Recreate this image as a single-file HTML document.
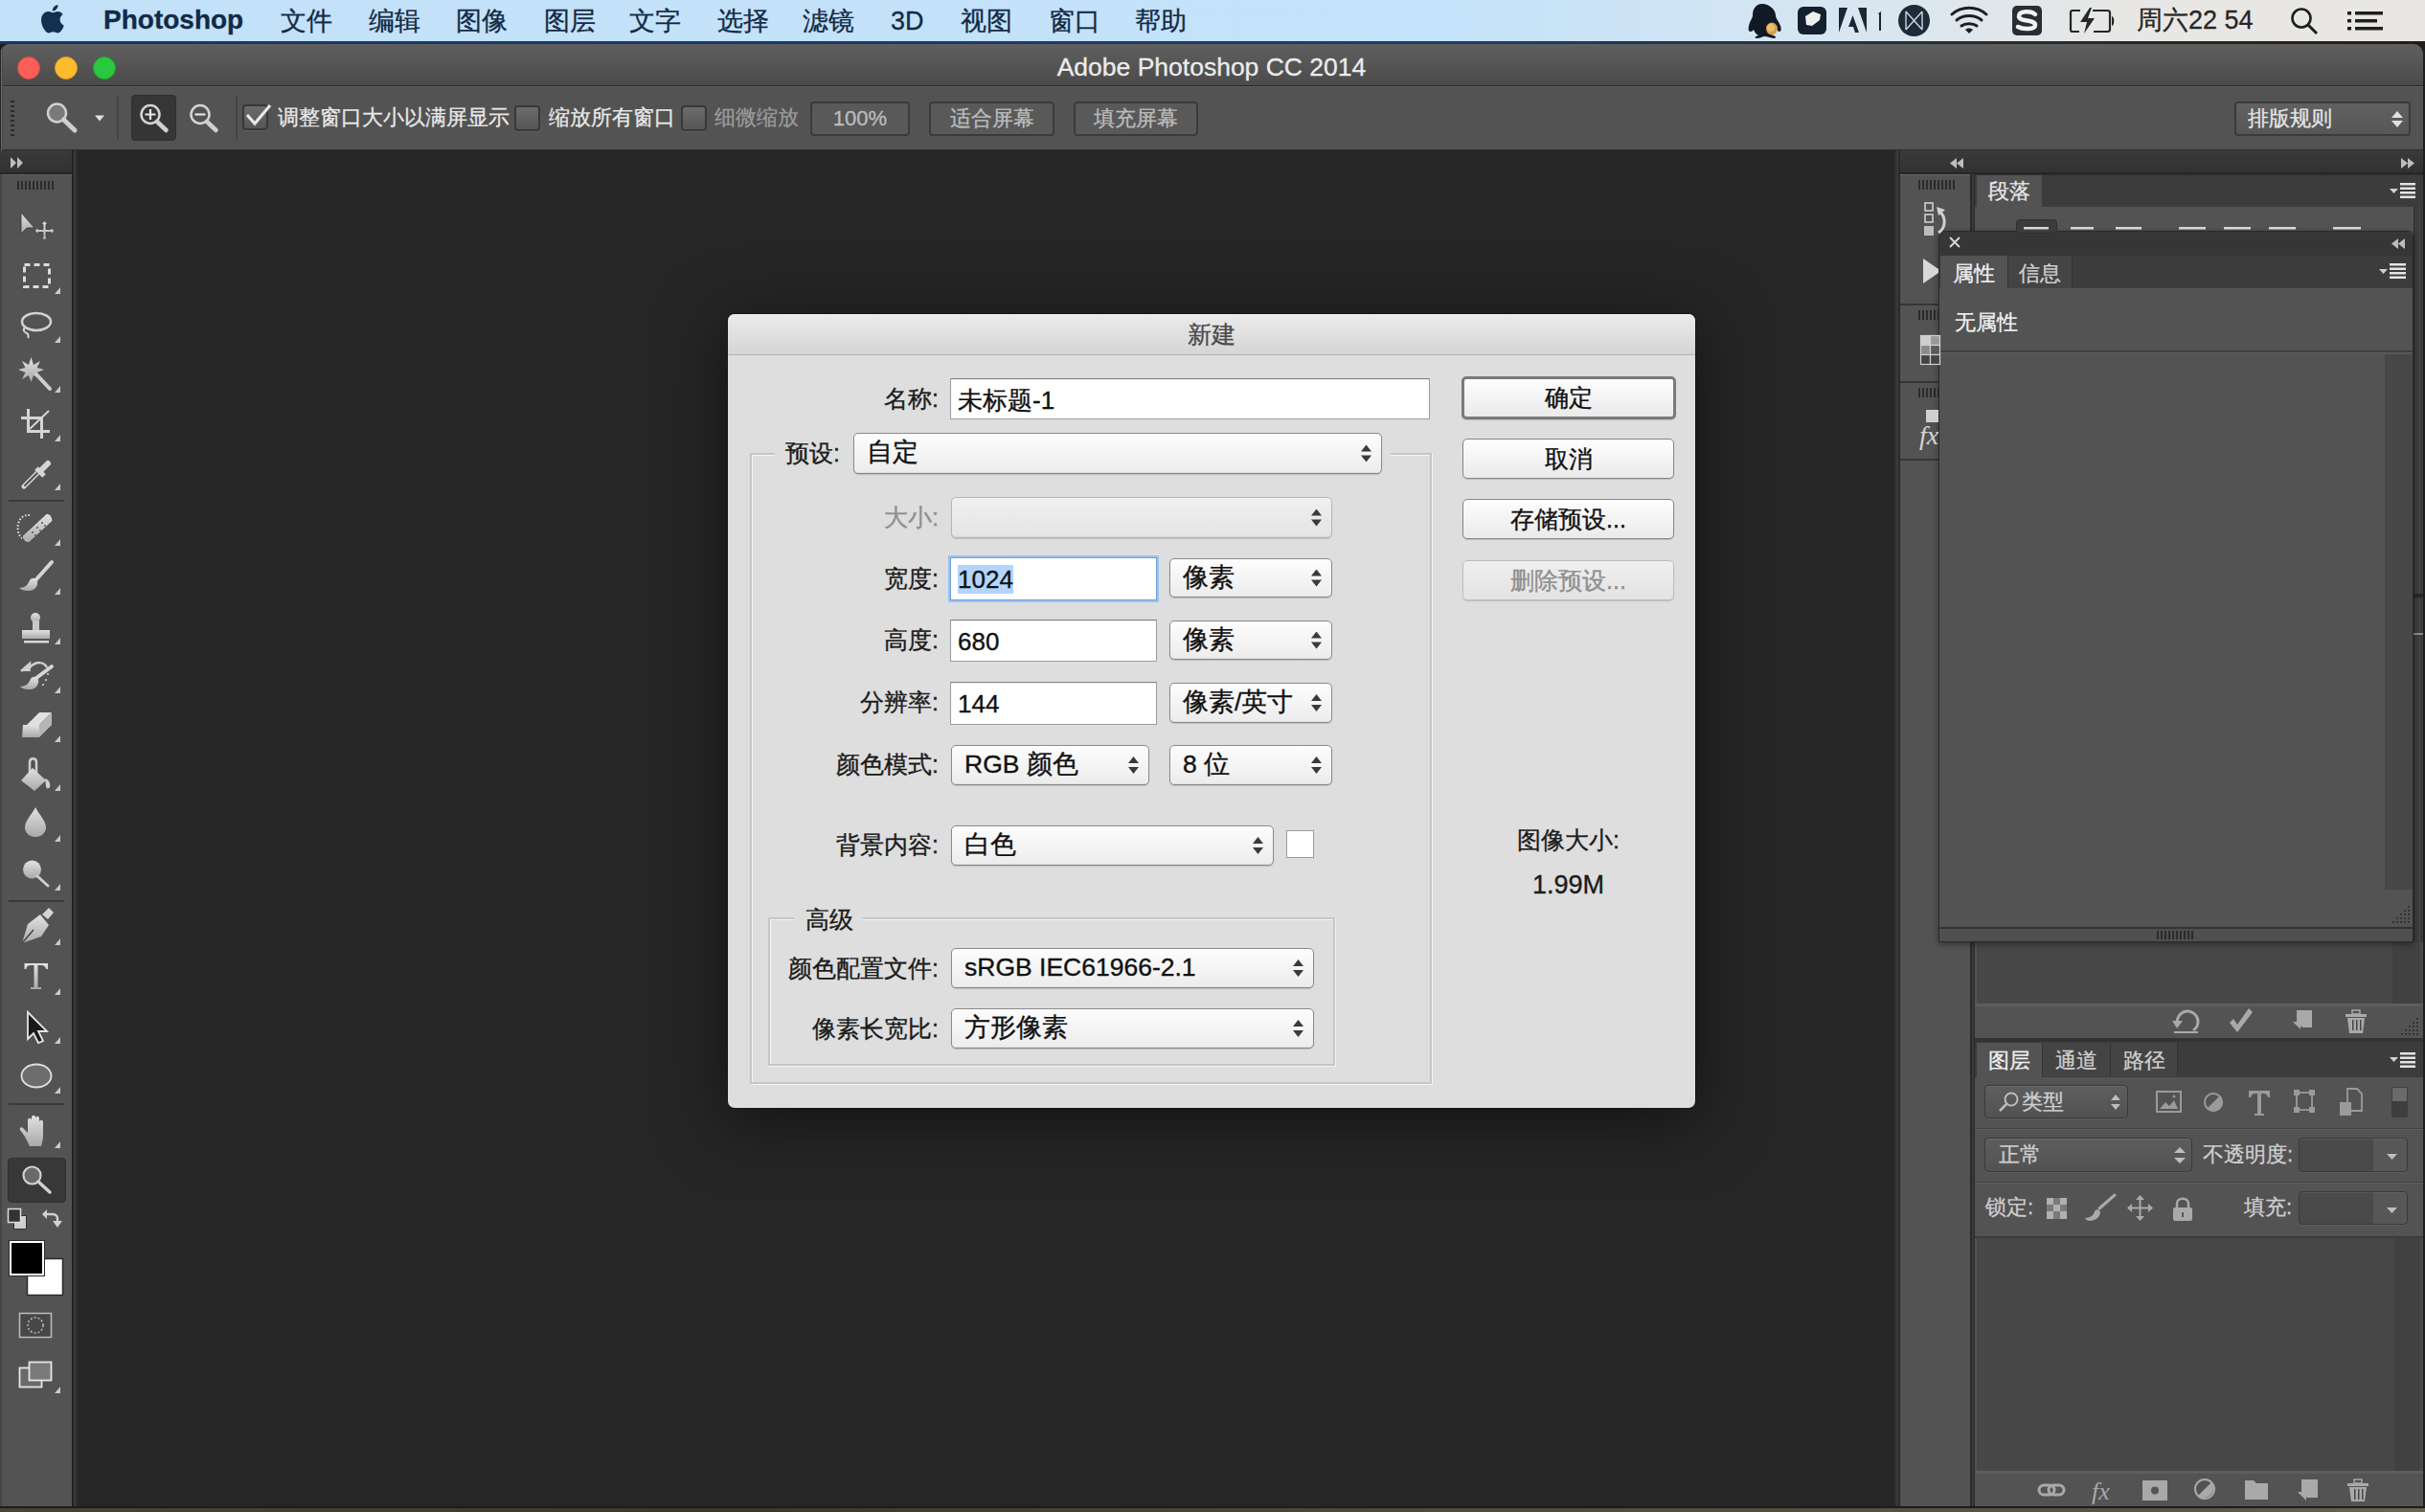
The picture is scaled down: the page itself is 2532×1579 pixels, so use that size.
<!DOCTYPE html>
<html><head><meta charset="utf-8">
<style>
*{margin:0;padding:0;box-sizing:border-box}
html,body{width:2532px;height:1579px;overflow:hidden;background:#1e1e1e;font-family:"Liberation Sans",sans-serif}
.a{position:absolute}
div{-webkit-text-stroke:0.3px currentColor}
#dlg ~ div{-webkit-text-stroke:0.35px currentColor}
#menubar{left:0;top:0;width:2532px;height:44px;background:linear-gradient(90deg,#c3e1f8 0%,#c4e2f9 60%,#d6e6f2 75%,#e8e7e5 88%,#e9e7e3 100%)}
#menuline{left:0;top:43px;width:2532px;height:3px;background:linear-gradient(90deg,#17375e,#1d3d63 60%,#2a2a2a 85%,#221d18)}
.mi{position:absolute;top:6px;font-size:27px;color:#122a45;line-height:32px;white-space:nowrap}
#win{left:0;top:46px;width:2530px;height:1529px;border-bottom:2px solid #1c1c1c;background:#262626;border-radius:10px 10px 0 0;overflow:hidden}
#title{left:0;top:46px;border-radius:10px 10px 0 0;width:2530px;height:43px;background:linear-gradient(#5f5f5f,#4b4b4b);}
#titletext{left:0;top:2px;width:2530px;text-align:center;font-size:26.5px;line-height:44px;color:#ececec}
.tl{position:absolute;top:13px;width:24px;height:24px;border-radius:50%}
#opts{left:0;top:89px;width:2530px;height:68px;background:#535353;border-top:1px solid #2a2a2a;border-bottom:1px solid #2b2b2b}
.ot{position:absolute;font-size:21.6px;line-height:26px;color:#e8e8e8;white-space:nowrap}
.cb{position:absolute;width:27px;height:27px;border-radius:4px;background:linear-gradient(#6b6b6b,#565656);border:2px solid #383838;box-shadow:0 1px 0 rgba(255,255,255,.08)}
.obtn{position:absolute;top:16px;height:36px;border-radius:4px;background:#595959;border:2px solid #3b3b3b;color:#bcbcbc;font-size:22px;line-height:32px;text-align:center}

#dlg{left:760px;top:328px;width:1010px;height:829px;background:#dedede;border-radius:7px;box-shadow:0 12px 70px rgba(0,0,0,.55),0 0 0 1px #1b1b1b}
#dlgt{left:760px;top:328px;width:1010px;height:43px;background:linear-gradient(#ebebeb,#d5d5d5);border-radius:7px 7px 0 0;border-bottom:1px solid #b4b4b4;text-align:center;font-size:25px;line-height:42px;color:#4b4b4b}
.dl{position:absolute;font-size:25px;line-height:30px;color:#1b1b1b;text-align:right;white-space:nowrap}
.fld{position:absolute;background:#fff;border:1px solid #9d9d9d;border-top-color:#7f7f7f;box-shadow:inset 0 1px 1px rgba(0,0,0,.08);font-size:26px;line-height:44px;padding-left:7px;color:#111;white-space:nowrap}
.pop{position:absolute;background:linear-gradient(#fdfdfd,#ececec);border:1px solid #8a8a8a;border-radius:5px;box-shadow:0 1px 1px rgba(0,0,0,.15),inset 0 -1px 0 rgba(0,0,0,.05);font-size:26.5px;line-height:38px;padding-left:13px;color:#111;white-space:nowrap}
.pop:after{content:"";position:absolute;right:10px;top:50%;margin-top:-9px;width:11px;height:18px;background:linear-gradient(#3a3a3a,#3a3a3a) no-repeat;clip-path:path('M5.5 0 L11 7 L0 7 Z M0 11 L11 11 L5.5 18 Z')}
.dbtn{position:absolute;left:1527px;width:221px;height:42px;background:linear-gradient(#fefefe,#eaeaea);border:1px solid #858585;border-radius:5px;box-shadow:0 1px 1px rgba(0,0,0,.15);text-align:center;font-size:25px;line-height:40px;color:#111}
.gb{position:absolute;border:2px solid #c6c6c6;border-right-color:#c6c6c6;box-shadow:inset 1px 1px 0 #f4f4f4,1px 1px 0 #f4f4f4}

.pt{position:absolute;font-size:22px;line-height:26px;color:#e6e6e6;white-space:nowrap}
.grip{position:absolute;height:10px;background:repeating-linear-gradient(90deg,#2b2b2b 0 2px,transparent 2px 4px)}
.tab{position:absolute;height:35px;font-size:22px;line-height:37px;color:#dcdcdc;text-align:center}
.dd{position:absolute;border:1px solid #3a3a3a;border-radius:4px;background:linear-gradient(#5e5e5e,#525252);box-shadow:inset 0 1px 0 rgba(255,255,255,.08),0 1px 0 rgba(255,255,255,.06);font-size:22px;line-height:34px;color:#cfcfcf;white-space:nowrap}
</style></head><body>
<div id="menubar" class="a">
  <svg class="a" style="left:42px;top:4px" width="25" height="31" viewBox="0 0 25 31"><path fill="#12304f" d="M20.6 16.4c0-3.6 3-5.4 3.1-5.5-1.7-2.5-4.3-2.8-5.2-2.9-2.2-.2-4.3 1.300-5.400 1.3-1.1 0-2.800-1.300-4.700-1.200C5.900 8.200 3.600 9.600 2.300 11.800c-2.600 4.500-.7 11.200 1.900 14.900 1.200 1.800 2.700 3.800 4.600 3.700 1.800-.1 2.500-1.200 4.800-1.200 2.200 0 2.900 1.200 4.800 1.200 2 0 3.300-1.800 4.500-3.600 1.400-2.100 2-4.100 2-4.200-.1 0-3.900-1.500-4.300-6.200zM17 5.600c1-1.200 1.700-2.900 1.500-4.600-1.400.1-3.200 1-4.200 2.200-.9 1-1.700 2.700-1.500 4.400 1.600.1 3.200-.8 4.200-2z"/></svg>
  <div class="mi" style="left:108px;font-weight:bold;font-size:28px;top:5px">Photoshop</div>
  <div class="mi" style="left:293px">文件</div>
  <div class="mi" style="left:385px">编辑</div>
  <div class="mi" style="left:476px">图像</div>
  <div class="mi" style="left:568px">图层</div>
  <div class="mi" style="left:657px">文字</div>
  <div class="mi" style="left:749px">选择</div>
  <div class="mi" style="left:838px">滤镜</div>
  <div class="mi" style="left:930px">3D</div>
  <div class="mi" style="left:1003px">视图</div>
  <div class="mi" style="left:1095px">窗口</div>
  <div class="mi" style="left:1185px">帮助</div>
  <div class="mi" style="left:2231px;color:#262626;font-size:27px;top:5px">周六22 54</div>
</div>
<svg class="a" style="left:1800px;top:0" width="732" height="44" viewBox="1800 0 732 44">
<!-- QQ -->
<path d="M1840 4C1833 4 1830 10 1830 16C1830 19 1827 22 1826 27C1825 31 1826 33 1828 33C1829 33 1830 32 1831 31C1832 34 1834 36 1836 37C1833 38 1831 39 1834 40C1838 40 1841 38 1842 38C1846 38 1849 40 1853 40C1856 39 1853 37 1850 37C1853 35 1855 33 1855 31C1856 32 1857 33 1858 33C1860 33 1860 30 1859 27C1857 22 1854 19 1854 16C1854 10 1847 4 1840 4Z" fill="#111a24"/>
<ellipse cx="1850" cy="30" rx="6" ry="6.5" fill="#d4a04a"/>
<ellipse cx="1849" cy="29" rx="4" ry="4" fill="#e8be6e"/>
<!-- evernote-like -->
<rect x="1877" y="7" width="30" height="29" rx="6" fill="#13202e"/>
<path d="M1885 17L1893 12L1901 15L1900 21L1892 27L1886 26Z" fill="#f0f0f0"/>
<!-- adobe -->
<path d="M1920 8H1929L1920 34Z M1940 8H1949V34Z M1934.5 16L1941 34H1937L1935 28H1930Z" fill="#1b2734"/>
<path d="M1961 14L1964 12V32H1962V15Z" fill="#222"/>
<!-- M circle -->
<circle cx="1998.5" cy="21.5" r="16.5" fill="#1e2c3a"/>
<path d="M1990 12V31M2007 12V31M1990 12L2007 31M2007 12L1990 31" stroke="#cdd6dd" stroke-width="1.4" fill="none"/>
<!-- wifi -->
<g fill="none" stroke="#1e1e1e" stroke-width="3" stroke-linecap="round"><path d="M2038 15C2048 6 2064 6 2074 15"/><path d="M2043 21C2050 15 2062 15 2069 21"/><path d="M2048 27C2052 24 2060 24 2064 27"/></g>
<path d="M2052 31L2056 35L2060 31C2058 29 2054 29 2052 31Z" fill="#1e1e1e"/>
<!-- S -->
<rect x="2101" y="6" width="31" height="31" rx="5" fill="#2a2e33"/>
<path d="M2125 15C2121 11 2108 11 2108 17C2108 23 2125 20 2125 26C2125 31 2112 31 2107 28" fill="none" stroke="#f2f2f2" stroke-width="4.5" stroke-linecap="round"/>
<!-- battery -->
<path d="M2172 11H2164C2163 11 2162 12 2162 13V31C2162 32 2163 33 2164 33H2171 M2185 11H2200C2202 11 2203 12 2203 13V31C2203 32 2202 33 2200 33H2186" fill="none" stroke="#262626" stroke-width="2.2"/>
<path d="M2205 17C2208 17 2208 27 2205 27Z" fill="#262626"/>
<path d="M2182 8L2172 23H2179L2176 35L2187 19H2180L2184 8Z" fill="#262626"/>
<!-- search -->
<circle cx="2403" cy="19" r="9.5" fill="none" stroke="#1e1e1e" stroke-width="2.6"/>
<path d="M2410 26L2419 35" stroke="#1e1e1e" stroke-width="3"/>
<!-- list -->
<g fill="#1e1e1e"><rect x="2451" y="12" width="4" height="3.5"/><rect x="2451" y="20" width="4" height="3.5"/><rect x="2451" y="28" width="4" height="3.5"/><rect x="2459" y="12" width="29" height="3.5"/><rect x="2459" y="20" width="23" height="3.5"/><rect x="2459" y="28" width="29" height="3.5"/></g>
</svg>

<div id="menuline" class="a"></div>
<div id="win" class="a"></div>
<div class="a" style="left:0;top:1575px;width:2532px;height:4px;background:linear-gradient(90deg,#4a4236,#3d362c 30%,#4f4a3c 60%,#5a5443 90%,#6a6450)"></div>
<div id="title" class="a">
  <div class="tl" style="left:18px;background:#fc5f57;border:1px solid #de4a40"></div>
  <div class="tl" style="left:57px;background:#fdbc2e;border:1px solid #dc9d1e"></div>
  <div class="tl" style="left:97px;background:#29c840;border:1px solid #1aab29"></div>
  <div id="titletext" class="a">Adobe Photoshop CC 2014</div>
</div>
<div id="opts" class="a"></div>
<div class="a" style="left:0;top:90px;width:2530px;height:1px;background:#6a6a6a;opacity:.5"></div>
<div class="a" style="left:0;top:52px;width:3px;height:1521px;background:linear-gradient(90deg,#262626 0 1px,#6a6a6a 1px 2px,#4a4a4a 2px 3px)"></div>
<!-- options bar contents -->
<div class="a" style="left:11px;top:105px;width:4px;height:40px;background:repeating-linear-gradient(#2a2a2a 0 2px,transparent 2px 5px)"></div>
<div class="a" style="left:122px;top:100px;width:2px;height:46px;background:#444"></div>
<div class="a" style="left:137px;top:99px;width:47px;height:48px;background:#363636;border-radius:4px;border:1px solid #2e2e2e"></div>
<div class="a" style="left:246px;top:100px;width:2px;height:46px;background:#444"></div>
<div class="cb" style="left:253px;top:109px"></div>
<div class="ot" style="left:290px;top:110px">调整窗口大小以满屏显示</div>
<div class="cb" style="left:537px;top:110px"></div>
<div class="ot" style="left:573px;top:110px">缩放所有窗口</div>
<div class="cb" style="left:711px;top:110px"></div>
<div class="ot" style="left:746px;top:110px;color:#9b9b9b">细微缩放</div>
<div class="obtn" style="left:846px;top:106px;width:104px">100%</div>
<div class="obtn" style="left:970px;top:106px;width:131px">适合屏幕</div>
<div class="obtn" style="left:1121px;top:106px;width:130px">填充屏幕</div>
<div class="obtn" style="left:2333px;top:106px;width:184px;text-align:left;padding-left:12px;color:#e6e6e6;background:linear-gradient(#616161,#565656)">排版规则</div>
<!-- left toolbar -->
<div class="a" style="left:0;top:157px;width:75px;height:25px;background:linear-gradient(#3a3a3a,#313131);border-bottom:2px solid #262626"></div>
<div class="a" style="left:0;top:182px;width:75px;height:1391px;background:#535353;border-left:2px solid #454545;border-top:1px solid #5e5e5e"></div>
<div class="a" style="left:75px;top:157px;width:6px;height:1416px;background:linear-gradient(90deg,#5c5c5c 0 0px,#232323 0 2px,#3b3b3b 2px 4px,#2b2b2b 4px 6px)"></div>
<svg class="a" style="left:0;top:0" width="80" height="1579" viewBox="0 0 80 1579">
<defs>
<linearGradient id="lg" x1="0" y1="0" x2="0" y2="1"><stop offset="0" stop-color="#e2e2e2"/><stop offset="1" stop-color="#a9a9a9"/></linearGradient>
</defs>
<g fill="#c9c9c9" stroke="none">
<!-- corner triangles -->
<path d="M57 307L63 307L63 300Z M57 358L63 358L63 351Z M57 410L63 410L63 403Z M57 461L63 461L63 454Z M57 512L63 512L63 505Z M57 570L63 570L63 563Z M57 621L63 621L63 614Z M57 673L63 673L63 666Z M57 724L63 724L63 717Z M57 775L63 775L63 768Z M57 826L63 826L63 819Z M57 879L63 879L63 872Z M57 930L63 930L63 923Z M57 987L63 987L63 980Z M57 1039L63 1039L63 1032Z M57 1090L63 1090L63 1083Z M57 1142L63 1142L63 1135Z M57 1199L63 1199L63 1192Z M57 1455L63 1455L63 1448Z"/>
</g>
<!-- separators -->
<g fill="#3a3a3a"><rect x="9" y="522" width="58" height="2"/><rect x="9" y="940" width="58" height="2"/><rect x="9" y="1152" width="58" height="2"/></g>
<!-- grip -->
<rect x="18" y="188" width="40" height="10" fill="none"/>
<g fill="#2c2c2c"><path d="M18 189h2v9h-2zM22 189h2v9h-2zM26 189h2v9h-2zM30 189h2v9h-2zM34 189h2v9h-2zM38 189h2v9h-2zM42 189h2v9h-2zM46 189h2v9h-2zM50 189h2v9h-2zM54 189h2v9h-2z"/></g>
<!-- move -->
<path d="M22 222L22 244L28 238L36 238Z" fill="url(#lg)" stroke="#333" stroke-width="0.8"/>
<path d="M46.5 230.5L50 234.5L48 234.5L48 239.5L53 239.5L53 237.5L57 241L53 244.5L53 242.5L48 242.5L48 247.5L50 247.5L46.5 251L43 247.5L45 247.5L45 242.5L40 242.5L40 244.5L36 241L40 237.5L40 239.5L45 239.5L45 234.5L43 234.5Z" fill="url(#lg)" stroke="#3a3a3a" stroke-width="0.8"/>
<!-- marquee -->
<rect x="25.5" y="276.5" width="26" height="23" fill="none" stroke="#dcdcdc" stroke-width="3" stroke-dasharray="6 4"/>
<!-- lasso -->
<ellipse cx="38" cy="336" rx="15" ry="9" fill="none" stroke="#d2d2d2" stroke-width="2.5"/>
<path d="M26 342c-3 3 0 5 2 6s2 4 1 5" fill="none" stroke="#d2d2d2" stroke-width="2"/>
<!-- magic wand -->
<path d="M32.5 373L35 381L42 377L38.5 384L46 386L38.5 389L42 396L35 392L32.5 399L30 392L23 396L26.5 389L19 386L26.5 384L23 377L30 381Z" fill="url(#lg)"/>
<path d="M38 391L52 406" stroke="#cfcfcf" stroke-width="4" stroke-linecap="round"/>
<!-- crop -->
<g stroke="#d5d5d5" stroke-width="3" fill="none"><path d="M29.5 427V450.5H52"/><path d="M22 436.5H43.5V458"/><path d="M31 448L51 429" stroke-width="2"/></g>
<!-- eyedropper -->
<path d="M25 508L41 492" stroke="#d5d5d5" stroke-width="5" stroke-linecap="round"/>
<path d="M26 507L40 493" stroke="#535353" stroke-width="2" stroke-linecap="round"/>
<path d="M38 489L46 497" stroke="#d5d5d5" stroke-width="5"/>
<path d="M43 491L50 484" stroke="#d5d5d5" stroke-width="6" stroke-linecap="round"/>
<!-- healing -->
<path d="M31 538C22 537 17 546 19 555C20 560 23 563 26 563" fill="none" stroke="#e5e5e5" stroke-width="2" stroke-dasharray="1.5 2"/>
<path d="M23 560L49 536Q55 538 55 544L30 567Q24 566 23 560Z" fill="url(#lg)" stroke="#3a3a3a" stroke-width="0.8"/>
<g fill="#555"><circle cx="34" cy="556" r="1"/><circle cx="39" cy="551" r="1"/><circle cx="44" cy="546" r="1"/><circle cx="37" cy="559" r="1"/><circle cx="42" cy="554" r="1"/><circle cx="47" cy="549" r="1"/></g>
<!-- brush -->
<path d="M38 605L54 587" stroke="#d5d5d5" stroke-width="4" stroke-linecap="round"/>
<path d="M20 614C26 614 29 611 31 606C33 603 38 603 39 607C40 612 36 617 30 617C25 617 22 616 20 614Z" fill="url(#lg)"/>
<!-- stamp -->
<circle cx="37" cy="645" r="5" fill="url(#lg)"/><rect x="34" y="648" width="7" height="11" fill="#c8c8c8"/>
<rect x="23" y="658" width="29" height="9" fill="url(#lg)"/><rect x="25" y="669" width="26" height="2.5" fill="#d8d8d8"/>
<!-- history brush -->
<path d="M22 701L31 693L31 697C38 690 46 691 49 697" fill="none" stroke="#cfcfcf" stroke-width="2.5"/>
<path d="M22 701L32 701L31 693Z" fill="#cfcfcf"/>
<path d="M38 708L54 696" stroke="#d5d5d5" stroke-width="4" stroke-linecap="round"/>
<path d="M21 717C27 717 30 714 32 709C34 706 39 706 40 710C41 715 37 720 31 720C26 720 23 719 21 717Z" fill="url(#lg)"/>
<g fill="#ddd"><circle cx="50" cy="704" r="1"/><circle cx="48" cy="710" r="1"/><circle cx="45" cy="715" r="1"/></g>
<!-- eraser -->
<path d="M28 757L41 744L54 744L41 757Z" fill="#e0e0e0"/><path d="M41 757L54 744L54 757L41 770Z" fill="#b5b5b5"/><path d="M24 757L41 757L41 770L23 770Z" fill="url(#lg)"/>
<!-- bucket -->
<path d="M31 809V796C31 791 38 791 38 796V809" fill="none" stroke="#cfcfcf" stroke-width="2.5"/>
<path d="M22 815L34 802L48 815L36 826Z" fill="url(#lg)"/><path d="M47 813C51 814 53 818 52 822C51 824 48 824 48 821" fill="#cfcfcf"/>
<!-- blur -->
<path d="M37 843C33 851 26 857 26 864C26 870 31 874 37 874C43 874 48 870 48 864C48 857 41 851 37 843Z" fill="url(#lg)"/>
<!-- dodge -->
<circle cx="33.5" cy="908" r="9.5" fill="url(#lg)"/><path d="M39 915L50 925" stroke="#cfcfcf" stroke-width="3" stroke-linecap="round"/>
<!-- pen -->
<path d="M23 985L29 965L42 955L51 966L43 978Z" fill="url(#lg)"/><path d="M23 985L35 971" stroke="#444" stroke-width="1.5"/>
<path d="M44 955L51 948L56 953L50 960Z" fill="#d5d5d5"/>
<!-- type -->
<path d="M25.5 1006H50V1012H48C47 1009 46 1008 43 1008H39.5V1031H43V1033H32V1031H35.5V1008H32C29 1008 28 1009 27.5 1012H25.5Z" fill="url(#lg)"/>
<!-- path selection -->
<path d="M29 1057L29 1085L35 1079L40 1089L45 1087L40 1077L49 1077Z" fill="#1a1a1a" stroke="#e5e5e5" stroke-width="1.8"/>
<!-- ellipse -->
<ellipse cx="38" cy="1123.5" rx="15.5" ry="12" fill="#6d6d6d" stroke="#e0e0e0" stroke-width="1.8"/>
<!-- hand -->
<path d="M31 1197L26 1187L21 1180C20 1178 22 1176 24 1178L29 1183V1170C29 1167 33 1167 33 1170V1179V1167C33 1164 37 1164 37 1167V1179V1168C37 1165 41 1165 41 1168V1180V1172C41 1169 45 1169 45 1172V1185C45 1190 44 1193 43 1197Z" fill="url(#lg)"/>
<!-- zoom selected -->
<rect x="8.5" y="1209.5" width="60" height="46" rx="4" fill="#383838" stroke="#2f2f2f"/>
<circle cx="33.5" cy="1227.5" r="9" fill="#6a6a6a" stroke="#d0d0d0" stroke-width="2.2"/><path d="M40 1234L52 1245" stroke="#d0d0d0" stroke-width="3.5" stroke-linecap="round"/>
<!-- small default colors -->
<rect x="14.5" y="1269.5" width="13" height="14" fill="#cfcfcf" stroke="#333"/>
<rect x="8.5" y="1262.5" width="13" height="14" fill="#333" stroke="#ddd" stroke-width="1.5"/>
<!-- swap arrows -->
<path d="M45 1268H55C58 1268 60 1270 60 1273V1276" fill="none" stroke="#d0d0d0" stroke-width="2.5"/>
<path d="M44 1268L49 1263V1273Z M55 1275H65L60 1282Z" fill="#d0d0d0"/>
<!-- fg/bg -->
<rect x="28.5" y="1314.5" width="37" height="38" fill="#fff" stroke="#2b2b2b" stroke-width="1.5"/>
<rect x="9.5" y="1295.5" width="37" height="37" fill="#000" stroke="#2b2b2b" stroke-width="1"/>
<rect x="11" y="1297" width="34" height="34" fill="none" stroke="#fff" stroke-width="2"/>
<!-- quick mask -->
<rect x="20.5" y="1371.5" width="33" height="25" fill="#474747" stroke="#bdbdbd" stroke-width="1.5"/>
<circle cx="37" cy="1384" r="8" fill="none" stroke="#c0c0c0" stroke-width="1.5" stroke-dasharray="2 2"/>
<!-- screen mode -->
<rect x="20.5" y="1428.5" width="23" height="20" fill="#6a6a6a" stroke="#e5e5e5" stroke-width="1.8"/>
<rect x="30.5" y="1422.5" width="23" height="19" fill="#7a7a7a" stroke="#e5e5e5" stroke-width="1.8"/>
<!-- >> -->
<path d="M11 164L17 170L11 176Z M18 164L24 170L18 176Z" fill="#bdbdbd"/>
</svg>

<!-- right columns -->
<div class="a" style="left:1978px;top:157px;width:6px;height:1416px;background:linear-gradient(90deg,#2e2e2e 0 2px,#3a3a3a 2px 4px,#2a2a2a 4px 6px)"></div>
<div class="a" style="left:1984px;top:157px;width:546px;height:25px;background:linear-gradient(#3a3a3a,#313131);border-bottom:2px solid #262626"></div>
<div class="a" style="left:1984px;top:182px;width:73px;height:1391px;background:#535353;border-top:1px solid #666"></div>
<div class="a" style="left:2057px;top:182px;width:6px;height:1391px;background:linear-gradient(90deg,#2a2a2a 0 2px,#3a3a3a 2px 4px,#2a2a2a 4px 6px)"></div>
<div class="a" style="left:2062px;top:182px;width:468px;height:1391px;background:#535353"></div>


<!-- right panels -->
<!-- narrow column sections -->
<div class="a" style="left:1984px;top:317px;width:73px;height:2px;background:#363636"></div>
<div class="a" style="left:1984px;top:398px;width:73px;height:2px;background:#363636"></div>
<div class="a" style="left:1984px;top:479px;width:73px;height:2px;background:#363636"></div>
<div class="grip" style="left:2003px;top:188px;width:38px"></div>
<div class="grip" style="left:2003px;top:324px;width:38px"></div>
<div class="grip" style="left:2003px;top:405px;width:38px"></div>
<!-- paragraph panel tab bar -->
<div class="a" style="left:2062px;top:182px;width:468px;height:34px;background:#3c3c3c;border-top:1px solid #2e2e2e"></div>
<div class="tab" style="left:2064px;top:183px;width:68px;height:33px;background:#535353;color:#e8e8e8;line-height:33px">段落</div>
<div class="a" style="left:2520px;top:216px;width:10px;height:768px;background:linear-gradient(90deg,#2e2e2e 0 1px,#3d3d3d 1px 6px,#474747 6px 7px,#3a3a3a 7px)"></div>
<div class="a" style="left:2520px;top:620px;width:10px;height:4px;background:#262626"></div>
<div class="a" style="left:2520px;top:661px;width:10px;height:2px;background:#8a8a8a"></div>
<!-- history content behind -->
<div class="a" style="left:2064px;top:984px;width:434px;height:64px;background:#474747"></div>
<div class="a" style="left:2498px;top:984px;width:32px;height:64px;background:#414141;border-right:3px solid #4a4a4a"></div>
<div class="a" style="left:2062px;top:1048px;width:468px;height:3px;background:#5e5e5e"></div>
<div class="a" style="left:2062px;top:1051px;width:468px;height:34px;background:#535353"></div>
<div class="a" style="left:2062px;top:1084px;width:468px;height:4px;background:#333"></div>
<!-- layers panel -->
<div class="a" style="left:2062px;top:1088px;width:468px;height:37px;background:#3c3c3c"></div>
<div class="tab" style="left:2064px;top:1089px;width:68px;height:36px;background:#535353;color:#f0f0f0">图层</div>
<div class="tab" style="left:2132px;top:1089px;width:71px;height:35px;background:#444;border-left:1px solid #333;color:#cfcfcf">通道</div>
<div class="tab" style="left:2203px;top:1089px;width:71px;height:35px;background:#444;border-left:1px solid #333;border-right:1px solid #333;color:#cfcfcf">路径</div>
<div class="a" style="left:2062px;top:1178px;width:468px;height:2px;background:#404040;border-bottom:1px solid #5f5f5f"></div>
<div class="dd" style="left:2072px;top:1133px;width:150px;height:35px;padding-left:38px">类型</div>
<div class="a" style="left:2062px;top:1234px;width:468px;height:2px;background:#404040;border-bottom:1px solid #5f5f5f"></div>
<div class="dd" style="left:2072px;top:1188px;width:217px;height:36px;padding-left:14px">正常</div>
<div class="pt" style="left:2300px;top:1193px;color:#cfcfcf">不透明度:</div>
<div class="dd" style="left:2400px;top:1188px;width:114px;height:36px;background:linear-gradient(90deg,#4a4a4a 0 77px,#575757 77px)"></div>
<div class="a" style="left:2062px;top:1291px;width:468px;height:2px;background:#3c3c3c"></div>
<div class="pt" style="left:2073px;top:1248px;color:#cfcfcf">锁定:</div>
<div class="pt" style="left:2343px;top:1248px;color:#cfcfcf">填充:</div>
<div class="dd" style="left:2400px;top:1244px;width:114px;height:35px;background:linear-gradient(90deg,#4a4a4a 0 77px,#575757 77px)"></div>
<div class="a" style="left:2064px;top:1293px;width:436px;height:243px;background:#474747"></div>
<div class="a" style="left:2500px;top:1293px;width:30px;height:243px;background:#414141;border-right:3px solid #4a4a4a"></div>
<div class="a" style="left:2062px;top:1536px;width:468px;height:3px;background:#5e5e5e"></div>
<!-- floating properties panel -->
<div class="a" style="left:2024px;top:241px;width:496px;height:743px;background:#535353;border:1px solid #2a2a2a;border-radius:5px 5px 0 0;box-shadow:0 2px 6px rgba(0,0,0,.4)"></div>
<div class="a" style="left:2025px;top:242px;width:494px;height:25px;background:#363636;border-radius:5px 5px 0 0"></div>
<div class="a" style="left:2025px;top:267px;width:494px;height:34px;background:#3c3c3c"></div>
<div class="tab" style="left:2026px;top:267px;width:70px;height:36px;background:#535353;color:#f0f0f0">属性</div>
<div class="tab" style="left:2096px;top:267px;width:68px;height:34px;background:#444;border-left:1px solid #333;border-right:1px solid #333;color:#cfcfcf">信息</div>
<div class="pt" style="left:2041px;top:324px;color:#f0f0f0">无属性</div>
<div class="a" style="left:2025px;top:366px;width:494px;height:3px;background:#3e3e3e;border-bottom:1px solid #5e5e5e"></div>
<div class="a" style="left:2490px;top:370px;width:29px;height:559px;background:#474747"></div>
<div class="a" style="left:2025px;top:968px;width:494px;height:2px;background:#333"></div>
<div class="a" style="left:2025px;top:970px;width:494px;height:13px;background:#4f4f4f"></div>
<div class="grip" style="left:2252px;top:972px;width:40px;height:9px"></div>
<!-- options bar icons -->
<svg class="a" style="left:0;top:90px" width="300" height="66" viewBox="0 90 300 66">
<circle cx="59.5" cy="118" r="9.5" fill="#7a7a7a" stroke="#d0d0d0" stroke-width="2.5"/>
<path d="M66.5 125L78 136" stroke="#cfcfcf" stroke-width="5" stroke-linecap="round"/>
<path d="M99 120.5H109L104 126.5Z" fill="#e0e0e0"/>
<circle cx="157" cy="119.5" r="9.5" fill="none" stroke="#d5d5d5" stroke-width="2.5"/>
<path d="M157 114V125M151.5 119.5H162.5" stroke="#e5e5e5" stroke-width="2.2"/>
<path d="M164 127L173.5 136" stroke="#cfcfcf" stroke-width="4.5" stroke-linecap="round"/>
<circle cx="209" cy="119.5" r="9.5" fill="none" stroke="#d5d5d5" stroke-width="2.5"/>
<path d="M203.5 119.5H214.5" stroke="#e5e5e5" stroke-width="2.2"/>
<path d="M216 127L225.5 136" stroke="#cfcfcf" stroke-width="4.5" stroke-linecap="round"/>
<path d="M258 120L266 129L282 110" fill="none" stroke="#e8e8e8" stroke-width="3.2"/>
</svg>
<!-- opts dropdown arrows -->
<svg class="a" style="left:2490px;top:110px" width="24" height="30" viewBox="0 0 24 30"><path d="M7 13L13 6L19 13Z M7 16H19L13 23Z" fill="#e0e0e0"/></svg>
<!-- right columns icons -->
<svg class="a" style="left:1984px;top:157px" width="548" height="1420" viewBox="1984 157 548 1420">
<path d="M2043 165L2036 170.5L2043 176Z M2050 165L2043 170.5L2050 176Z" fill="#bdbdbd"/>
<path d="M2507 165L2514 170.5L2507 176Z M2514 165L2521 170.5L2514 176Z" fill="#bdbdbd"/>
<!-- history icon -->
<g fill="none" stroke="#cfcfcf" stroke-width="1.6"><rect x="2010" y="212" width="8" height="8"/><rect x="2010" y="224" width="8" height="8"/></g>
<rect x="2009" y="236" width="10" height="10" fill="#bdbdbd"/>
<path d="M2024 243C2032 238 2032 226 2025 221" fill="none" stroke="#d0d0d0" stroke-width="3"/>
<path d="M2022 216L2031 219L2024 225Z" fill="#d0d0d0"/>
<!-- action play -->
<path d="M2008 270L2024 281L2024 285L2008 296Z" fill="#d8d8d8"/>
<!-- swatches grid -->
<g fill="#8a8a8a" stroke="#cfcfcf" stroke-width="1.2"><rect x="2005.5" y="350.5" width="10" height="10" fill="#cfcfcf"/><rect x="2015.5" y="350.5" width="10" height="10" fill="#9a9a9a"/><rect x="2005.5" y="360.5" width="10" height="10" fill="#8a8a8a"/><rect x="2015.5" y="360.5" width="10" height="10" fill="#5a5a5a"/><rect x="2005.5" y="370.5" width="10" height="10" fill="#444"/><rect x="2015.5" y="370.5" width="10" height="10" fill="#444"/></g>
<!-- styles fx -->
<rect x="2011" y="428" width="13" height="13" fill="#cfcfcf"/>
<text x="2004" y="464" font-family="Liberation Serif" font-style="italic" font-size="28" fill="#d5d5d5">fx</text>
<!-- paragraph panel menu & align row -->
<path d="M2495 197H2504L2499.5 202Z" fill="#d0d0d0"/>
<g fill="#e5e5e5"><rect x="2506" y="191" width="16" height="2.5"/><rect x="2506" y="195.5" width="16" height="2.5"/><rect x="2506" y="200" width="16" height="2.5"/><rect x="2506" y="204.5" width="16" height="2.5"/></g>
<rect x="2105.5" y="229.5" width="42" height="14" rx="3" fill="#3c3c3c" stroke="#2e2e2e"/>
<g fill="#d8d8d8"><rect x="2113" y="237" width="26" height="2.5"/><rect x="2162" y="237" width="24" height="2.5"/><rect x="2209" y="237" width="27" height="2.5"/><rect x="2275" y="237" width="28" height="2.5"/><rect x="2322" y="237" width="28" height="2.5"/><rect x="2369" y="237" width="28" height="2.5"/><rect x="2436" y="237" width="29" height="2.5"/></g>
<!-- history footer icons -->
<g fill="#a9a9a9" stroke="none">
<path d="M2273 1069C2273 1061 2278 1056 2284 1056C2290 1056 2295 1061 2295 1067C2295 1071 2293 1074 2290 1076" fill="none" stroke="#a9a9a9" stroke-width="3"/>
<path d="M2268 1066L2279 1066L2273 1074Z"/>
<rect x="2270" y="1077" width="25" height="2"/>
<path d="M2328 1068L2332 1064L2336 1070L2348 1053L2352 1057L2336 1078Z"/>
<path d="M2398 1055H2414V1073H2404L2398 1067Z"/><path d="M2394 1067H2402V1075Z"/>
<rect x="2449" y="1059" width="22" height="3"/><rect x="2456" y="1055" width="8" height="4" fill="none" stroke="#a9a9a9" stroke-width="1.5"/>
<path d="M2451 1063H2469L2467 1079H2453Z"/>
</g>
<g fill="#464646"><rect x="2456" y="1065" width="1.5" height="11"/><rect x="2460" y="1065" width="1.5" height="11"/><rect x="2464" y="1065" width="1.5" height="11"/></g>
<g fill="#2a2a2a"><circle cx="2524" cy="1064" r="1"/><circle cx="2520" cy="1068" r="1"/><circle cx="2524" cy="1068" r="1"/><circle cx="2516" cy="1072" r="1"/><circle cx="2520" cy="1072" r="1"/><circle cx="2524" cy="1072" r="1"/><circle cx="2512" cy="1076" r="1"/><circle cx="2516" cy="1076" r="1"/><circle cx="2520" cy="1076" r="1"/><circle cx="2524" cy="1076" r="1"/><circle cx="2508" cy="1080" r="1"/><circle cx="2512" cy="1080" r="1"/><circle cx="2516" cy="1080" r="1"/><circle cx="2520" cy="1080" r="1"/><circle cx="2524" cy="1080" r="1"/></g>
<!-- layers panel menu -->
<path d="M2495 1104H2504L2499.5 1109Z" fill="#d0d0d0"/>
<g fill="#e5e5e5"><rect x="2506" y="1099" width="16" height="2.5"/><rect x="2506" y="1103.5" width="16" height="2.5"/><rect x="2506" y="1108" width="16" height="2.5"/><rect x="2506" y="1112.5" width="16" height="2.5"/></g>
<!-- filter row -->
<circle cx="2100" cy="1148" r="6.5" fill="none" stroke="#bdbdbd" stroke-width="2"/><path d="M2095 1153L2088 1160" stroke="#bdbdbd" stroke-width="2.5"/>
<path d="M2204 1149L2209 1143L2214 1149Z M2204 1153H2214L2209 1159Z" fill="#bdbdbd"/>
<rect x="2252" y="1140" width="25" height="21" fill="none" stroke="#9a9a9a" stroke-width="2"/>
<path d="M2255 1158L2261 1151L2265 1155L2270 1149L2274 1158Z" fill="#9a9a9a"/><circle cx="2270" cy="1145" r="1.5" fill="#9a9a9a"/>
<circle cx="2311" cy="1151" r="9" fill="none" stroke="#9a9a9a" stroke-width="2"/><path d="M2304 1158L2318 1144A9 9 0 0 1 2304 1158Z" fill="#9a9a9a"/>
<path d="M2348 1139H2370V1146H2368C2367 1143 2366 1142 2363 1142H2361V1163H2364V1165H2354V1163H2357V1142H2355C2352 1142 2351 1143 2350 1146H2348Z" fill="#9a9a9a"/>
<rect x="2398" y="1141" width="16" height="18" fill="none" stroke="#9a9a9a" stroke-width="1.8"/>
<g fill="#9a9a9a"><rect x="2395" y="1138" width="6" height="6"/><rect x="2411" y="1138" width="6" height="6"/><rect x="2395" y="1156" width="6" height="6"/><rect x="2411" y="1156" width="6" height="6"/></g>
<path d="M2451 1137H2461L2466 1142V1160H2451Z" fill="none" stroke="#9a9a9a" stroke-width="1.8"/>
<rect x="2443" y="1151" width="12" height="14" fill="#9a9a9a"/>
<rect x="2497" y="1135" width="17" height="32" rx="2" fill="#3e3e3e"/><rect x="2498" y="1136" width="15" height="14" fill="#6a6a6a"/>
<!-- blend arrows -->
<path d="M2270 1204L2276 1198L2282 1204Z M2270 1209H2282L2276 1215Z" fill="#bdbdbd"/>
<path d="M2492 1205H2503L2497.5 1211Z M2492 1261H2503L2497.5 1267Z" fill="#bdbdbd"/>
<!-- lock icons -->
<rect x="2137" y="1251" width="21" height="22" fill="#7a7a7a"/>
<g fill="#b0b0b0"><rect x="2137" y="1251" width="7" height="7"/><rect x="2151" y="1251" width="7" height="7"/><rect x="2144" y="1258" width="7" height="7"/><rect x="2137" y="1265" width="7" height="8"/><rect x="2151" y="1265" width="7" height="8"/></g>
<path d="M2192 1262L2208 1248" stroke="#a9a9a9" stroke-width="3" stroke-linecap="round"/>
<path d="M2177 1272C2183 1272 2186 1269 2187 1265C2189 1262 2193 1263 2193 1267C2192 1271 2188 1275 2182 1275C2180 1275 2178 1274 2177 1272Z" fill="#a9a9a9"/>
<path d="M2234.5 1249V1274M2222 1261.5H2247" stroke="#a9a9a9" stroke-width="2"/>
<path d="M2234.5 1248L2239 1253H2230Z M2234.5 1275L2239 1270H2230Z M2221 1261.5L2226 1257V1266Z M2248 1261.5L2243 1257V1266Z" fill="#a9a9a9"/>
<path d="M2273 1262V1257C2273 1250 2285 1250 2285 1257V1262" fill="none" stroke="#a9a9a9" stroke-width="2.5"/>
<rect x="2269" y="1261" width="20" height="14" rx="2" fill="#a9a9a9"/><rect x="2278" y="1266" width="2" height="5" fill="#555"/>
<!-- layers footer -->
<g fill="none" stroke="#a9a9a9" stroke-width="3"><rect x="2129" y="1551" width="16" height="10" rx="5"/><rect x="2139" y="1551" width="16" height="10" rx="5"/></g>
<text x="2184" y="1566" font-family="Liberation Serif" font-style="italic" font-size="26" fill="#a9a9a9">fx</text>
<rect x="2237" y="1546" width="26" height="21" fill="#a9a9a9"/><circle cx="2250" cy="1556.5" r="4" fill="#555"/>
<circle cx="2302" cy="1555" r="10" fill="none" stroke="#a9a9a9" stroke-width="2"/><path d="M2295 1562L2309 1548A10 10 0 0 1 2295 1562Z" fill="#a9a9a9"/>
<path d="M2344 1546H2353L2356 1549H2368V1566H2344Z" fill="#a9a9a9"/>
<path d="M2403 1545H2420V1564H2409L2403 1558Z" fill="#a9a9a9"/><path d="M2399 1558H2408V1567Z" fill="#a9a9a9"/>
<rect x="2451" y="1549" width="22" height="3" fill="#a9a9a9"/><rect x="2458" y="1545" width="8" height="4" fill="none" stroke="#a9a9a9" stroke-width="1.5"/>
<path d="M2453 1553H2471L2469 1568H2455Z" fill="#a9a9a9"/>
<g fill="#464646"><rect x="2458" y="1555" width="1.5" height="11"/><rect x="2462" y="1555" width="1.5" height="11"/><rect x="2466" y="1555" width="1.5" height="11"/></g>
<!-- props panel -->
<path d="M2036 248L2046 258M2046 248L2036 258" stroke="#d5d5d5" stroke-width="2"/>
<path d="M2504 249L2497 254.5L2504 260Z M2511 249L2504 254.5L2511 260Z" fill="#bdbdbd"/>
<path d="M2484 281H2493L2488.5 286Z" fill="#d0d0d0"/>
<g fill="#e5e5e5"><rect x="2495" y="275" width="17" height="2.5"/><rect x="2495" y="279.5" width="17" height="2.5"/><rect x="2495" y="284" width="17" height="2.5"/><rect x="2495" y="288.5" width="17" height="2.5"/></g>
<g fill="#2a2a2a"><circle cx="2515" cy="947" r="1"/><circle cx="2511" cy="951" r="1"/><circle cx="2515" cy="951" r="1"/><circle cx="2507" cy="955" r="1"/><circle cx="2511" cy="955" r="1"/><circle cx="2515" cy="955" r="1"/><circle cx="2503" cy="959" r="1"/><circle cx="2507" cy="959" r="1"/><circle cx="2511" cy="959" r="1"/><circle cx="2515" cy="959" r="1"/><circle cx="2499" cy="963" r="1"/><circle cx="2503" cy="963" r="1"/><circle cx="2507" cy="963" r="1"/><circle cx="2511" cy="963" r="1"/><circle cx="2515" cy="963" r="1"/></g>
</svg>

<!-- dialog -->
<div id="dlg" class="a"></div>
<div id="dlgt" class="a">新建</div>
<div class="gb" style="left:783px;top:473px;width:712px;height:659px"></div>
<div class="a" style="left:809px;top:468px;width:643px;height:10px;background:#dedede"></div>
<div class="gb" style="left:802px;top:958px;width:592px;height:155px"></div>
<div class="a" style="left:829px;top:952px;width:72px;height:12px;background:#dedede"></div>
<div class="dl" style="left:841px;top:945px">高级</div>
<div class="dl" style="left:780px;width:200px;top:401px">名称:</div>
<div class="fld" style="left:992px;top:395px;width:501px;height:43px">未标题-1</div>
<div class="dl" style="left:700px;width:177px;top:458px">预设:</div>
<div class="pop" style="left:891px;top:452px;width:552px;height:43px">自定</div>
<div class="dl" style="left:780px;width:200px;top:525px;color:#8f8f8f">大小:</div>
<div class="pop" style="left:993px;top:519px;width:398px;height:43px;background:linear-gradient(#f0f0f0,#e4e4e4);border-color:#b5b5b5"></div>
<div class="dl" style="left:780px;width:200px;top:589px">宽度:</div>
<div class="fld" style="left:992px;top:582px;width:216px;height:45px;border:1px solid #6f9fd8;box-shadow:0 0 0 2px #9cc3ee"><span style="background:#b3d5fd">1024</span></div>
<div class="pop" style="left:1221px;top:583px;width:170px;height:41px">像素</div>
<div class="dl" style="left:780px;width:200px;top:653px">高度:</div>
<div class="fld" style="left:992px;top:647px;width:216px;height:44px">680</div>
<div class="pop" style="left:1221px;top:648px;width:170px;height:41px">像素</div>
<div class="dl" style="left:780px;width:200px;top:718px">分辨率:</div>
<div class="fld" style="left:992px;top:712px;width:216px;height:45px">144</div>
<div class="pop" style="left:1221px;top:713px;width:170px;height:42px">像素/英寸</div>
<div class="dl" style="left:780px;width:200px;top:783px">颜色模式:</div>
<div class="pop" style="left:993px;top:778px;width:207px;height:42px">RGB 颜色</div>
<div class="pop" style="left:1221px;top:778px;width:170px;height:42px">8 位</div>
<div class="dl" style="left:780px;width:200px;top:867px">背景内容:</div>
<div class="pop" style="left:993px;top:862px;width:337px;height:42px">白色</div>
<div class="a" style="left:1343px;top:867px;width:29px;height:29px;background:#fff;border:1px solid #9a9a9a"></div>
<div class="dl" style="left:780px;width:200px;top:996px">颜色配置文件:</div>
<div class="pop" style="left:993px;top:990px;width:379px;height:42px">sRGB IEC61966-2.1</div>
<div class="dl" style="left:780px;width:200px;top:1059px">像素长宽比:</div>
<div class="pop" style="left:993px;top:1053px;width:379px;height:42px">方形像素</div>
<div class="dbtn" style="left:1526px;top:393px;width:224px;height:45px;border:3px solid #7a7a7a;line-height:38px">确定</div>
<div class="dbtn" style="top:458px">取消</div>
<div class="dbtn" style="top:521px">存储预设...</div>
<div class="dbtn" style="top:585px;color:#8f8f8f;border-color:#bdbdbd;background:linear-gradient(#efefef,#e3e3e3)">删除预设...</div>
<div class="dl" style="left:1560px;width:155px;text-align:center;top:862px">图像大小:</div>
<div class="dl" style="left:1560px;width:155px;text-align:center;top:909px;font-size:27px">1.99M</div>
<script>
(function(){
  try{
  var t=document.createElement('span');
  t.style.cssText='position:absolute;left:0;top:0;font-size:100px;white-space:nowrap;visibility:hidden;-webkit-text-stroke:0;font-family:"Liberation Sans",sans-serif';
  t.textContent='\u8c03\u6574\u7a97\u53e3\u5927\u5c0f\u4ee5\u6ee1\u5c4f\u663e';
  document.body.appendChild(t);
  var w=t.getBoundingClientRect().width/1000;
  document.body.removeChild(t);
  if(!(w>0) || w>0.93) return;
  var g='linear-gradient(currentColor,currentColor)';
  var bg=g+' .1em .04em/.8em .075em no-repeat,'+g+' .1em .38em/.8em .075em no-repeat,'+g+' .1em .72em/.8em .075em no-repeat,'+g+' .14em .04em/.075em .75em no-repeat,'+g+' .78em .04em/.075em .75em no-repeat';
  var re=/[\u2e80-\u9fff\uf900-\ufaff\uff00-\uffef]/;
  var walker=document.createTreeWalker(document.body,NodeFilter.SHOW_TEXT,null);
  var nodes=[];while(walker.nextNode())nodes.push(walker.currentNode);
  nodes.forEach(function(n){
    var s=n.nodeValue;
    if(!re.test(s))return;
    var p=n.parentNode; if(!p||(p.closest&&p.closest('svg')))return;
    var frag=document.createDocumentFragment(), buf='';
    for(var i=0;i<s.length;i++){
      var c=s.charAt(i);
      if(re.test(c)){
        if(buf){frag.appendChild(document.createTextNode(buf));buf='';}
        var sp=document.createElement('span');
        sp.style.cssText='display:inline-block;width:1em;height:.84em;vertical-align:-.1em;-webkit-text-stroke:0;background:'+bg;
        frag.appendChild(sp);
      } else buf+=c;
    }
    if(buf)frag.appendChild(document.createTextNode(buf));
    p.replaceChild(frag,n);
  });
  }catch(e){}
})();
</script>
</body></html>
